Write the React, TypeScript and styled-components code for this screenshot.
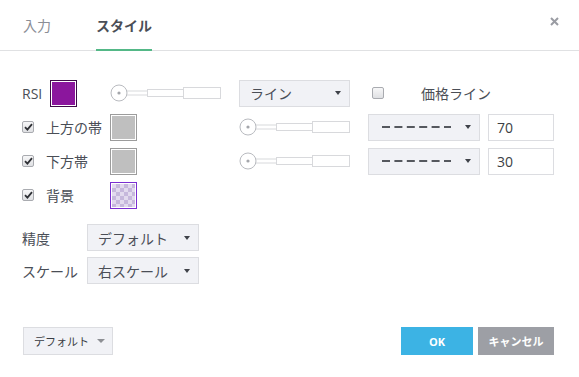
import React from 'react'
import styled, { createGlobalStyle } from 'styled-components'

const GlobalStyle = createGlobalStyle`
  html, body {
    margin: 0;
    padding: 0;
    background: #fff;
  }
  body {
    font-family: "Open Sans", "Noto Sans CJK JP", sans-serif;
    color: #4a4e56;
  }
`

const Dialog = styled.div`
  width: 579px;
  height: 377px;
  display: flex;
  flex-direction: column;
  box-sizing: border-box;
  background: #fff;
`

const Header = styled.div`
  height: 50px;
  display: flex;
  align-items: stretch;
  padding-left: 23px;
  gap: 45px;
  border-bottom: 1px solid #e0e1e3;
  position: relative;
`

const Tab = styled.div<{ $active?: boolean }>`
  display: flex;
  align-items: center;
  font-size: 14px;
  font-weight: ${({ $active }) => ($active ? 700 : 400)};
  color: ${({ $active }) => ($active ? '#4a4e57' : '#8b8e96')};
  border-bottom: 2px solid ${({ $active }) => ($active ? '#53b887' : 'transparent')};
  margin-bottom: -1px;
  padding-top: 1px;
`

const Close = styled.div`
  position: absolute;
  right: 20px;
  top: 17px;
  width: 9px;
  height: 9px;
  display: flex;
`

const Body = styled.div`
  padding: 28px 0 0 22px;
`

const Grid = styled.div`
  display: grid;
  grid-template-columns: 88px 129px 129px 120px 66px;
  grid-auto-rows: 28px;
  row-gap: 6px;
  align-items: center;
`

const Cell = styled.div<{ $gap?: number }>`
  display: flex;
  align-items: center;
  gap: ${({ $gap }) => $gap ?? 0}px;
`

const PriceCell = styled(Cell)`
  grid-column: span 2;
  padding-left: 4px;
  gap: 37px;
`

const Label = styled.span`
  font-size: 14px;
  color: #4a4e56;
  white-space: nowrap;
`

const Swatch = styled.div<{ $fill: string; $border: string; $checker?: boolean }>`
  width: 27px;
  height: 27px;
  box-sizing: border-box;
  border: 1px solid ${({ $border }) => $border};
  padding: 1px;
  background: #fff;
  &::after {
    content: '';
    display: block;
    width: 100%;
    height: 100%;
    background-color: ${({ $fill }) => $fill};
    background-image: ${({ $checker }) =>
      $checker
        ? 'conic-gradient(#c6b8dc 25%, #e2daee 0 50%, #c6b8dc 0 75%, #e2daee 0)'
        : 'none'};
    background-size: 8px 8px;
  }
`

const Box = styled.span`
  width: 12px;
  height: 12px;
  box-sizing: border-box;
  border: 1px solid #a9abb0;
  border-radius: 2px;
  background: linear-gradient(#f7f7f8, #dfe0e3);
  display: inline-flex;
  align-items: center;
  justify-content: center;
  flex: none;
`

const Check: React.FC<{ checked?: boolean }> = ({ checked }) => (
  <Box>
    {checked && (
      <svg width="9" height="8" viewBox="0 0 9 8" style={{ display: 'block' }}>
        <path d="M1 4.2 L3.4 6.6 L8 1.2" fill="none" stroke="#2f3136" strokeWidth="1.8" />
      </svg>
    )}
  </Box>
)

const Slider: React.FC = () => (
  <svg width="111" height="18" viewBox="0 0 111 18" style={{ display: 'block' }}>
    <rect x="73.5" y="3.5" width="37" height="11" fill="#fff" stroke="#d8d9dc" />
    <rect x="37.5" y="5.5" width="36" height="7" fill="#fff" stroke="#d8d9dc" />
    <rect x="16.5" y="7" width="21" height="4" fill="#fff" stroke="#d8d9dc" />
    <circle cx="9" cy="9" r="8" fill="#fff" stroke="#b9bbc0" />
    <circle cx="9" cy="9" r="1.6" fill="#a4a6ab" />
  </svg>
)

const SelectBox = styled.div<{ $w: number }>`
  width: ${({ $w }) => $w}px;
  height: 27px;
  box-sizing: border-box;
  border: 1px solid #dcdde1;
  background: #f1f2f6;
  display: flex;
  align-items: center;
  padding: 0 8px 0 10px;
  font-size: 14px;
  color: #4a4e56;
  white-space: nowrap;
`

const SelectText = styled.span`
  flex: 1;
  display: flex;
  align-items: center;
`

const Caret = styled.span<{ $color?: string; $size?: number }>`
  width: 0;
  height: 0;
  border-left: ${({ $size }) => $size ?? 3.5}px solid transparent;
  border-right: ${({ $size }) => $size ?? 3.5}px solid transparent;
  border-top: ${({ $size }) => ($size ?? 3.5) + 0.5}px solid ${({ $color }) => $color ?? '#3f4249'};
  flex: none;
`

const Select: React.FC<{ w: number; children: React.ReactNode }> = ({ w, children }) => (
  <SelectBox $w={w}>
    <SelectText>{children}</SelectText>
    <Caret />
  </SelectBox>
)

const Dashes: React.FC = () => (
  <svg width="72" height="4" viewBox="0 0 72 4" style={{ display: 'block' }}>
    <line x1="3" y1="2" x2="73" y2="2" stroke="#55585e" strokeWidth="2" strokeDasharray="8 4.4" />
  </svg>
)

const NumberInput = styled.div`
  width: 66px;
  height: 27px;
  box-sizing: border-box;
  border: 1px solid #dcdde1;
  background: #fff;
  display: flex;
  align-items: center;
  padding-left: 8px;
  font-size: 14px;
  color: #3c3f45;
`

const Options = styled.div`
  margin-top: 15px;
  display: flex;
  flex-direction: column;
  gap: 6px;
`

const OptionRow = styled.div`
  display: flex;
  align-items: center;
  height: 27px;
`

const OptionLabel = styled(Label)`
  width: 65px;
`

const Footer = styled.div`
  margin-top: auto;
  display: flex;
  align-items: center;
  padding: 0 25px 22px 23px;
`

const DefaultButton = styled.div`
  width: 90px;
  height: 28px;
  box-sizing: border-box;
  border: 1px solid #dcdde1;
  background: #f1f2f6;
  display: flex;
  align-items: center;
  gap: 8px;
  padding-left: 10px;
  font-size: 11px;
  color: #3a3d43;
  white-space: nowrap;
`

const Button = styled.div<{ $bg: string; $w: number }>`
  width: ${({ $w }) => $w}px;
  height: 28px;
  background: ${({ $bg }) => $bg};
  color: #fff;
  font-size: 11px;
  font-weight: 700;
  display: flex;
  align-items: center;
  justify-content: center;
  white-space: nowrap;
`

const Buttons = styled.div`
  margin-left: auto;
  display: flex;
  gap: 5px;
`

const App: React.FC = () => {
  return (
    <Dialog>
      <GlobalStyle />
      <Header>
        <Tab>入力</Tab>
        <Tab $active>スタイル</Tab>
        <Close>
          <svg width="9" height="9" viewBox="0 0 9 9">
            <path d="M1 1 L8 8 M8 1 L1 8" stroke="#9a9ca3" strokeWidth="2" />
          </svg>
        </Close>
      </Header>
      <Body>
        <Grid>
          <Cell $gap={8}>
            <Label>RSI</Label>
            <Swatch $fill="#8b169d" $border="#3e0a48" />
          </Cell>
          <Cell>
            <Slider />
          </Cell>
          <Cell>
            <Select w={111}>ライン</Select>
          </Cell>
          <PriceCell>
            <Check />
            <Label>価格ライン</Label>
          </PriceCell>

          <Cell $gap={12}>
            <Check checked />
            <Label>上方の帯</Label>
          </Cell>
          <Cell>
            <Swatch $fill="#bfbfbf" $border="#9c9c9c" />
          </Cell>
          <Cell>
            <Slider />
          </Cell>
          <Cell>
            <Select w={112}>
              <Dashes />
            </Select>
          </Cell>
          <Cell>
            <NumberInput>70</NumberInput>
          </Cell>

          <Cell $gap={12}>
            <Check checked />
            <Label>下方帯</Label>
          </Cell>
          <Cell>
            <Swatch $fill="#bfbfbf" $border="#9c9c9c" />
          </Cell>
          <Cell>
            <Slider />
          </Cell>
          <Cell>
            <Select w={112}>
              <Dashes />
            </Select>
          </Cell>
          <Cell>
            <NumberInput>30</NumberInput>
          </Cell>

          <Cell $gap={12}>
            <Check checked />
            <Label>背景</Label>
          </Cell>
          <Cell>
            <Swatch $fill="#e2daee" $border="#7a2fd0" $checker />
          </Cell>
        </Grid>
        <Options>
          <OptionRow>
            <OptionLabel>精度</OptionLabel>
            <Select w={112}>デフォルト</Select>
          </OptionRow>
          <OptionRow>
            <OptionLabel>スケール</OptionLabel>
            <Select w={112}>右スケール</Select>
          </OptionRow>
        </Options>
      </Body>
      <Footer>
        <DefaultButton>
          デフォルト
          <Caret $color="#8d8f94" $size={4} />
        </DefaultButton>
        <Buttons>
          <Button $bg="#3cb3e4" $w={72}>OK</Button>
          <Button $bg="#9d9fa5" $w={76}>キャンセル</Button>
        </Buttons>
      </Footer>
    </Dialog>
  )
}

export default App
